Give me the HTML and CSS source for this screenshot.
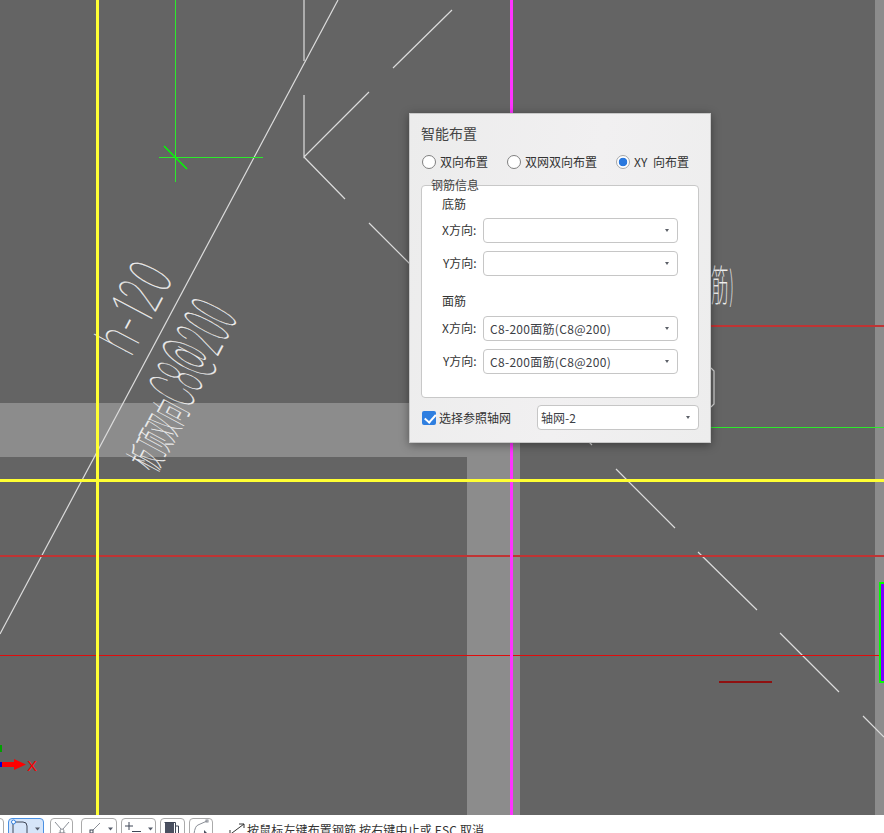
FILE: index.html
```html
<!DOCTYPE html>
<html lang="zh-CN">
<head>
<meta charset="utf-8">
<title>智能布置</title>
<link rel="stylesheet" href="styles.css">
</head>
<body>
<div class="app">
  <main class="canvas">
    <svg class="drawing" width="884" height="815" viewBox="0 0 884 815">
      <rect class="band" x="0" y="403" width="520" height="54"/>
      <rect class="band" x="467" y="403" width="53" height="412"/>
      <rect class="band" x="875" y="0" width="9" height="815"/>

      <g class="cad">
        <path d="M338 0L0 634"/>
        <path d="M304 0V61M304 95V157L369 92M393 68L452 10M304 157L345 199M369 223L410 264M585 438L592 445M616 469L675 528M698 552L757 610M780 633L839 692M863 716L884 737"/>
        <path d="M711 368L714 371V404L711 407"/>
      </g>

      <g class="cad-text" transform="translate(131 358) rotate(-62)">
        <text font-size="60" textLength="92" lengthAdjust="spacingAndGlyphs">h-120</text>
      </g>
      <g class="cad-text" transform="translate(155 474) rotate(-62)">
        <text font-size="42" textLength="72" lengthAdjust="spacingAndGlyphs">板顶双向</text>
        <text x="72" font-size="66" textLength="106" lengthAdjust="spacingAndGlyphs">C8@200</text>
      </g>
      <text class="cad-text" transform="translate(711 301) scale(0.42 1)" font-size="42">筋)</text>

      <path class="thin-green" d="M175.5 0V182M159 157.5H263M711 427.5H884"/>
      <path class="dotted-green" d="M164 146L187 169"/>
      <path class="red-wide" d="M0 556H884M710 326H884"/>
      <path class="red-thin" d="M0 655.5H884"/>
      <path class="dark-red" d="M719 682H772"/>
      <path class="magenta" d="M511.5 0V815"/>
      <path class="yellow" d="M97.5 0V815M0 480.5H884"/>
      <rect class="column" x="880" y="583" width="6" height="99"/>

      <g class="axis">
        <path class="axis-y" d="M1 745V752"/>
        <path class="axis-x" d="M0 762H14V759L26 764.5L14 770V767H0Z"/>
        <rect class="axis-z" x="0" y="762" width="2" height="5"/>
        <text x="27" y="771" class="axis-label">X</text>
      </g>
    </svg>

    <section class="dialog">
      <h1 class="dialog-title">智能布置</h1>
      <div class="mode-row">
        <label class="mode mode-a"><input type="radio" name="mode"><span>双向布置</span></label>
        <label class="mode mode-b"><input type="radio" name="mode"><span>双网双向布置</span></label>
        <label class="mode mode-xy"><input type="radio" name="mode" checked><span>XY 向布置</span></label>
      </div>
      <div class="group">
        <div class="legend">钢筋信息</div>
        <div class="sub-title">底筋</div>
        <div class="field"><span class="field-label">X方向:</span><div class="select"><span></span><i class="caret"></i></div></div>
        <div class="field"><span class="field-label label-y">Y方向:</span><div class="select"><span></span><i class="caret"></i></div></div>
        <div class="sub-title sub-title-top">面筋</div>
        <div class="field"><span class="field-label">X方向:</span><div class="select"><span class="select-text">C8-200面筋(C8@200)</span><i class="caret"></i></div></div>
        <div class="field"><span class="field-label label-y">Y方向:</span><div class="select"><span class="select-text">C8-200面筋(C8@200)</span><i class="caret"></i></div></div>
      </div>
      <div class="footer-row">
        <label class="check"><input type="checkbox" checked><span>选择参照轴网</span></label>
        <div class="select select-grid"><span>轴网-2</span><i class="caret"></i></div>
      </div>
    </section>
  </main>

  <footer class="statusbar">
    <div class="tool tool-cut"></div>
    <div class="tool tool-active">
      <svg width="34" height="15" viewBox="0 0 34 15"><path class="ico" d="M4 3H14Q18 3 18 7V15M4 3V15"/><circle class="ico-dot" cx="4.500" cy="3" r="2"/><path class="ico-caret" d="M26 8.500H31L28.500 11.500Z"/></svg>
    </div>
    <div class="tool tool-x tool-far">
      <svg width="22" height="15" viewBox="0 0 22 15"><path class="ico-light" d="M4 3L10 10M18 3L12 10M10 13L6 15M12 13L16 15"/><circle class="ico-light" cx="11" cy="12" r="2"/></svg>
    </div>
    <div class="tool tool-wide tool-farther">
      <svg width="34" height="15" viewBox="0 0 34 15"><path class="ico-light" d="M18 4L11 11"/><rect class="ico" x="8" y="11" width="3" height="3"/><path class="ico-caret" d="M26 8.500H31L28.500 11.500Z"/></svg>
    </div>
    <div class="tool tool-wide">
      <svg width="34" height="15" viewBox="0 0 34 15"><path class="ico" d="M3 7H11M7 3V11M10 12.500H19"/><path class="ico-caret" d="M26 8.500H31L28.500 11.500Z"/></svg>
    </div>
    <div class="tool tool-s">
      <svg width="23" height="15" viewBox="0 0 23 15"><rect class="ico-fill" x="4" y="4" width="9" height="11"/><path class="ico" d="M3.500 3.500H14.500V15M14.500 7H17.500V15"/></svg>
    </div>
    <div class="tool tool-s">
      <svg width="23" height="15" viewBox="0 0 23 15"><path class="ico-light" d="M4 15Q5 7 8 6L17 2"/><rect class="ico-light" x="16" y="1" width="2" height="2"/><path class="ico-fill" d="M14 11L17 14L14 15Z"/></svg>
    </div>
    <svg class="hint-icon" width="16" height="12" viewBox="0 0 16 12"><path class="ico-dark" d="M1 11.500L15 1M10 1H15V5M1 7V11.500H5"/></svg>
    <span class="hint">按鼠标左键布置钢筋 按右键中止或 ESC 取消</span>
  </footer>
</div>
</body>
</html>
```

FILE: styles.css
```css
* { box-sizing: border-box; }

html, body {
  margin: 0;
  padding: 0;
  height: 100%;
  overflow: hidden;
  background: #fff;
}

body {
  font-family: "Noto Sans CJK SC", "Liberation Sans", sans-serif;
  color: #333;
}

.app {
  width: 884px;
  height: 833px;
  display: flex;
  flex-direction: column;
  overflow: hidden;
}

/* Drawing area */
.canvas {
  position: relative;
  height: 815px;
  flex: none;
  background: #646464;
}

.drawing { display: block; }

.band { fill: #8c8c8c; }

.cad path { fill: none; stroke: #dcdcdc; stroke-width: 1.2; }

.cad-text text,
text.cad-text {
  fill: #f0f0f0;
  stroke: #f0f0f0;
  stroke-width: 0.25;
  font-family: "Inter", "Liberation Sans", "Noto Sans CJK SC", sans-serif;
  font-weight: 100;
}

.thin-green { fill: none; stroke: #2cea2c; stroke-width: 1; }
.dotted-green { fill: none; stroke: #00ff00; stroke-width: 1.5; }
.red-wide { fill: none; stroke: #c03434; stroke-width: 2; }
.red-thin { fill: none; stroke: #e00c0c; stroke-width: 1; }
.dark-red { fill: none; stroke: #8f1010; stroke-width: 2; }
.magenta { fill: none; stroke: #ff33ff; stroke-width: 3; }
.yellow { fill: none; stroke: #ffff33; stroke-width: 3; }
.column { fill: #8000ff; stroke: #00ff00; stroke-width: 2; }

.axis-x { fill: #ff0000; }
.axis-y { fill: none; stroke: #00a000; stroke-width: 2; }
.axis-z { fill: #0000d0; }
.axis-label {
  fill: #ff0000;
  font-family: "Liberation Sans", sans-serif;
  font-size: 15px;
}

/* Dialog */
.dialog {
  position: absolute;
  left: 409px;
  top: 113px;
  width: 302px;
  height: 330px;
  padding: 10px 12px 0 11px;
  background: linear-gradient(100deg, #ececec, #f1f0f1 55%, #ededed);
  border: 1px solid #c8c8c8;
  box-shadow: 0 2px 9px rgba(0, 0, 0, 0.4);
  font-size: 12px;
  line-height: 16px;
}

.dialog-title {
  margin: 0;
  font-size: 14px;
  font-weight: 400;
  line-height: 18px;
  color: #444;
}

.mode-row {
  display: flex;
  margin-top: 12px;
  margin-left: 1px;
  height: 16px;
}

.mode {
  display: flex;
  align-items: center;
  gap: 4px;
  color: #333;
}

.mode-a { margin-right: 19px; }
.mode-b { margin-right: 19px; }
.mode-xy span { word-spacing: 3px; }

.mode input {
  appearance: none;
  width: 14px;
  height: 14px;
  margin: 0;
  flex: none;
  border: 1px solid #808080;
  border-radius: 50%;
  background: #fff;
}

.mode input:checked {
  border-color: #a8a8a8;
  background: radial-gradient(circle, #2a78de 0 4px, #fff 4.6px);
}

.group {
  position: relative;
  width: 278px;
  height: 213px;
  margin-top: 15px;
  padding: 10px 20px 0;
  background: #fff;
  border: 1px solid #c8c8c8;
  border-radius: 4px;
}

.legend {
  position: absolute;
  left: 9px;
  top: -9px;
  color: #444;
}

.sub-title { color: #333; }
.sub-title-top { margin-top: 17px; }

.field {
  display: flex;
  align-items: center;
  height: 25px;
  margin-top: 6px;
}

.sub-title + .field { margin-top: 6px; }
.sub-title-top + .field { margin-top: 7px; }
.field + .field { margin-top: 8px; }

.field-label {
  width: 41px;
  flex: none;
  margin-top: -2px;
}

.label-y { padding-left: 1px; }

.select {
  flex: none;
  display: flex;
  align-items: center;
  justify-content: space-between;
  width: 195px;
  height: 25px;
  padding: 0 8px 0 6px;
  background: #fff;
  border: 1px solid #c6c6c6;
  border-radius: 4px;
  color: #3c4046;
}

.select-text { letter-spacing: 0.3px; }

.caret {
  width: 0;
  height: 0;
  border-left: 2.5px solid transparent;
  border-right: 2.5px solid transparent;
  border-top: 3px solid #5c6068;
}

.footer-row {
  display: flex;
  align-items: center;
  justify-content: space-between;
  width: 277px;
  margin-top: 7px;
  margin-left: 1px;
}

.check {
  display: flex;
  align-items: center;
  gap: 3px;
}

.check input {
  appearance: none;
  width: 14px;
  height: 14px;
  margin: 0;
  border-radius: 2px;
  background-color: #2f7fe0;
  position: relative;
}

.check input::after {
  content: "";
  position: absolute;
  left: 4.500px;
  top: 1.500px;
  width: 5px;
  height: 8.500px;
  border-right: 2px solid #fff;
  border-bottom: 2px solid #fff;
  transform: rotate(42deg);
}

.select-grid {
  width: 162px;
  padding-left: 3px;
}

/* Status bar */
.statusbar {
  flex: 1;
  display: flex;
  align-items: flex-start;
  gap: 4px;
  padding-top: 3px;
  background: #fff;
  overflow: hidden;
  font-size: 12px;
}

.tool {
  flex: none;
  height: 24px;
  border: 1px solid #aaa;
  border-radius: 4px;
  background: #fff;
  overflow: hidden;
}

.tool svg { display: block; }

.tool-cut { width: 24px; margin-left: -20px; }
.tool-active { width: 35.500px; background: #d6e5f9; border-color: #4a90e2; }
.tool-x { width: 23px; }
.tool-far { margin-left: 2.500px; }
.tool-wide { width: 35.500px; }
.tool-farther { margin-left: 4px; }
.tool-s { width: 24.500px; }

.ico { fill: none; stroke: #3f4656; stroke-width: 1; }
.ico-light { fill: none; stroke: #8a8e96; stroke-width: 1; }
.ico-dark { fill: none; stroke: #333; stroke-width: 1; }
.ico-dot { fill: #fff; stroke: #2f7fe0; stroke-width: 1; }
.ico-fill { fill: #4a5060; }
.ico-caret { fill: #555c6a; }

.hint-icon {
  flex: none;
  margin: 4.500px 0 0 12px;
}

.hint {
  white-space: nowrap;
  line-height: 16px;
  margin: 4px 0 0 -2px;
  letter-spacing: 0.14px;
  color: #333;
}
```
